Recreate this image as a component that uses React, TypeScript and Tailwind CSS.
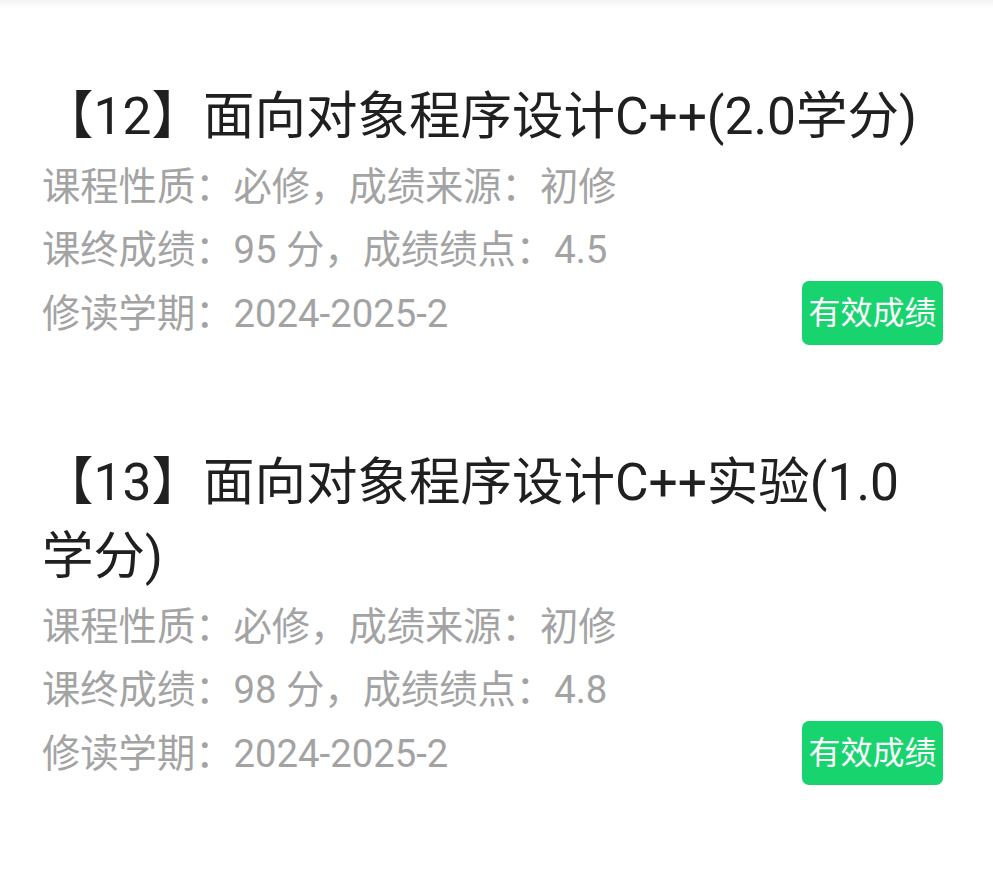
import React from "react";

type Course = {
  title: string;
  nature: string;
  source: string;
  score: string;
  gpa: string;
  term: string;
};

const courses: Course[] = [
  {
    title: "【12】面向对象程序设计C++(2.0学分)",
    nature: "必修",
    source: "初修",
    score: "95",
    gpa: "4.5",
    term: "2024-2025-2",
  },
  {
    title: "【13】面向对象程序设计C++实验(1.0学分)",
    nature: "必修",
    source: "初修",
    score: "98",
    gpa: "4.8",
    term: "2024-2025-2",
  },
];

function CourseCard({ c }: { c: Course }) {
  return (
    <div className="flex flex-col">
      <div className="text-[51.5px] leading-[74px] text-[#202020] pr-[20px] mb-[1px]">
        {c.title}
      </div>
      <div className="text-[38.3px] leading-[63px] text-[#a3a3a3]">
        课程性质：{c.nature}，成绩来源：{c.source}
      </div>
      <div className="text-[38.3px] leading-[63px] text-[#a3a3a3]">
        课终成绩：{c.score} 分，成绩绩点：{c.gpa}
      </div>
      <div className="flex items-center justify-between">
        <div className="text-[38.3px] leading-[63px] text-[#a3a3a3]">
          修读学期：{c.term}
        </div>
        <div className="w-[141px] h-[64px] rounded-[7px] bg-[#18d46e] text-white text-[32px] flex items-center justify-center">
          有效成绩
        </div>
      </div>
    </div>
  );
}

export default function App() {
  return (
    <div
      className="w-[993px] h-[873px] bg-white overflow-hidden"
      style={{ fontFamily: 'Roboto, "Noto Sans CJK SC", sans-serif' }}
    >
      <div className="h-[8px] bg-gradient-to-b from-[#f2f2f2] to-white" />
      <div className="pl-[42px] pr-[50px] pt-[72px] flex flex-col gap-[101px]">
        {courses.map((c) => (
          <CourseCard key={c.title} c={c} />
        ))}
      </div>
    </div>
  );
}
